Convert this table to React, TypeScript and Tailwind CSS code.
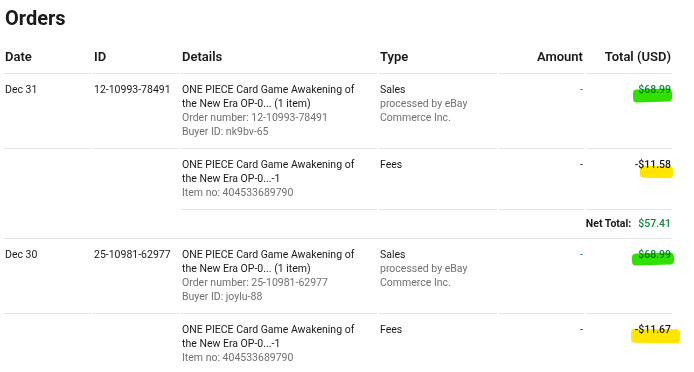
import React from 'react';

type Order = {
  date: string;
  orderId: string;
  buyer: string;
  sale: string;
  fee: string;
  net?: string;
  itemNo: string;
};

const orders: Order[] = [
  { date: 'Dec 31', orderId: '12-10993-78491', buyer: 'nk9bv-65', sale: '$68.99', fee: '-$11.58', net: '$57.41', itemNo: '404533689790' },
  { date: 'Dec 30', orderId: '25-10981-62977', buyer: 'joylu-88', sale: '$68.99', fee: '-$11.67', itemNo: '404533689790' },
];

const title = 'ONE PIECE Card Game Awakening of the New Era OP-0...';

// marker strokes drawn over the totals in the screenshot
const marks = [
  { sale: 'top-[6px] -right-px w-[39px] h-[13px] bg-[#2fe000]', fee: 'top-[8px] -right-[2px] w-[33px] h-[12px] bg-[#ffe500]' },
  { sale: 'top-[5px] -right-[3px] w-[42px] h-[12px] bg-[#2fe000]', fee: 'top-[6px] -right-[9px] w-[49px] h-[14px] bg-[#ffe500]' },
];

const cell = 'align-top py-[9px] pl-px border-b border-[#e5e5e5]';
const plain = 'align-top py-[9px] pl-px';
const head = 'pb-[7px] border-b border-[#e5e5e5] font-semibold';

const App = () => {
  return (
    <div className="w-[694px] h-[372px] overflow-hidden bg-white text-[#191919]" style={{ fontFamily: 'Roboto, "Liberation Sans", sans-serif' }}>
      <h1 className="pl-[5px] pt-[6px] text-[20px] leading-6 font-bold">Orders</h1>

      <table className="table-fixed border-separate border-spacing-x-[2px] border-spacing-y-0 ml-[2px] mt-[18px] w-[672px] text-[10.5px] leading-[14px]">
        <colgroup>
          <col className="w-[87px]" />
          <col className="w-[86px]" />
          <col className="w-[196px]" />
          <col className="w-[118px]" />
          <col className="w-[85px]" />
          <col className="w-[86px]" />
        </colgroup>
        <thead>
          <tr className="text-[13px] leading-[18px]">
            <th className={head + ' text-left pl-px'}>Date</th>
            <th className={head + ' text-left pl-px'}>ID</th>
            <th className={head + ' text-left pl-px'}>Details</th>
            <th className={head + ' text-left pl-px'}>Type</th>
            <th className={head + ' text-right pr-px'}>Amount</th>
            <th className={head + ' text-right pr-px'}>Total (USD)</th>
          </tr>
        </thead>
        <tbody>
          {orders.map((o, i) => (
            <React.Fragment key={o.orderId}>
              <tr>
                <td className={cell}>{o.date}</td>
                <td className={cell}>{o.orderId}</td>
                <td className={cell}>
                  <div className="pr-[14px]">{`${title} (1 item)`}</div>
                  <div className="text-[#707070]">{`Order number: ${o.orderId}`}</div>
                  <div className="text-[#707070]">{`Buyer ID: ${o.buyer}`}</div>
                </td>
                <td className={cell}>
                  <div>Sales</div>
                  <div className="text-[#707070] pr-[20px]">processed by eBay Commerce Inc.</div>
                </td>
                <td className={cell + ' text-right pr-px text-[#118a3f]'}>-</td>
                <td className={cell + ' text-right pr-px'}>
                  <div className="relative">
                    <span className={'absolute -rotate-2 rounded-sm ' + marks[i].sale} />
                    <span className="relative text-[#118a3f] font-medium mix-blend-multiply">{o.sale}</span>
                  </div>
                </td>
              </tr>
              <tr>
                <td className={plain}></td>
                <td className={plain}></td>
                <td className={cell}>
                  <div className="pr-[14px]">{`${title}-1`}</div>
                  <div className="text-[#707070]">{`Item no: ${o.itemNo}`}</div>
                </td>
                <td className={cell}>Fees</td>
                <td className={cell + ' text-right pr-px'}>-</td>
                <td className={cell + ' text-right pr-px'}>
                  <div className="relative">
                    <span className={'absolute rotate-1 rounded-sm ' + marks[i].fee} />
                    <span className="relative font-medium">{o.fee}</span>
                  </div>
                </td>
              </tr>
              {o.net && (
                <tr>
                  <td colSpan={6} className="py-[7px] pr-px text-right border-b border-[#e5e5e5]">
                    <span className="font-bold">Net Total:</span>
                    <span className="ml-[7px] font-medium text-[#118a3f]">{o.net}</span>
                  </td>
                </tr>
              )}
            </React.Fragment>
          ))}
        </tbody>
      </table>
    </div>
  );
};

export default App;
